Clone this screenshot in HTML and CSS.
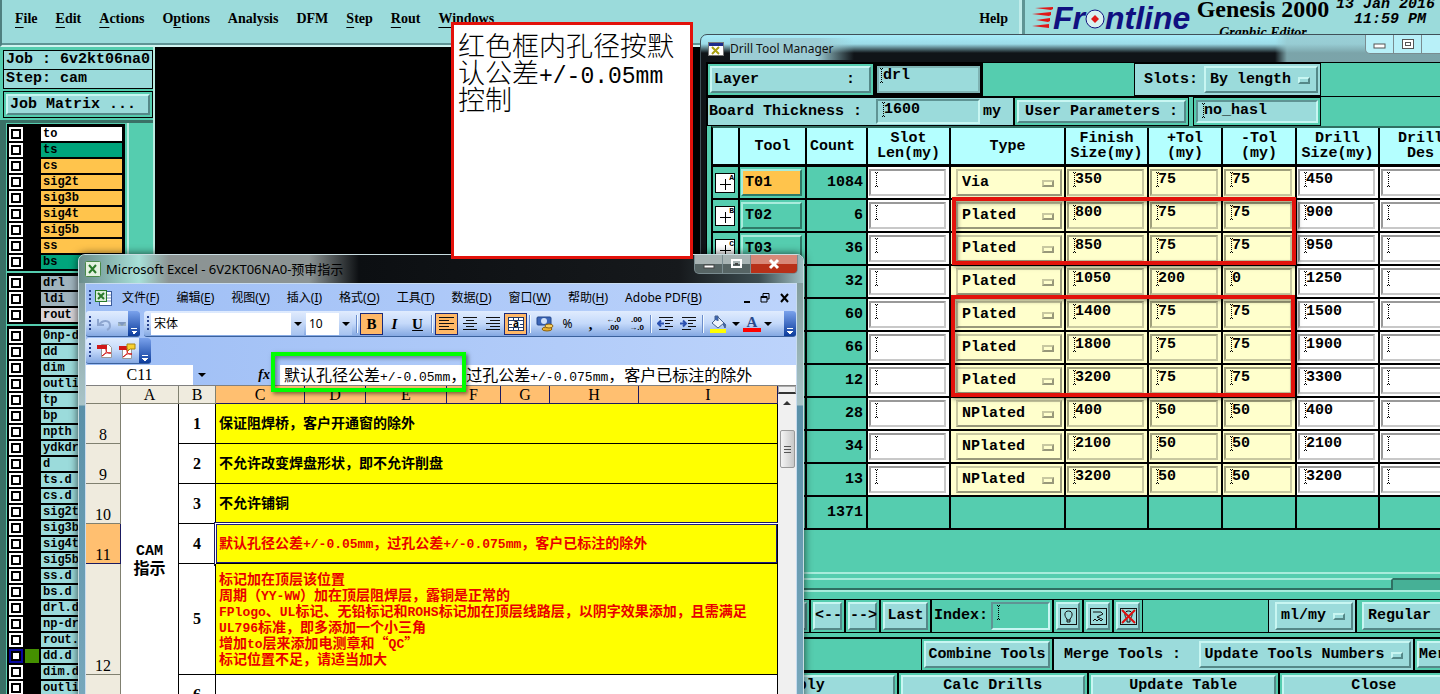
FILE: index.html
```html
<!DOCTYPE html>
<html lang="zh-CN">
<head>
    <meta charset="UTF-8">
    <meta name="viewport" content="width=device-width, initial-scale=1.0">
    <title>Genesis 2000 - Drill Tool Manager</title>
    <link rel="stylesheet" href="styles.css">
</head>
<body>
<div class="desktop">

    <!-- Genesis main window -->
    <header class="topbar">
        <nav class="menu">
            <a href="#"><u>F</u>ile</a>
            <a href="#"><u>E</u>dit</a>
            <a href="#"><u>A</u>ctions</a>
            <a href="#">O<u>p</u>tions</a>
            <a href="#">Analysis</a>
            <a href="#">DFM</a>
            <a href="#"><u>S</u>tep</a>
            <a href="#"><u>R</u>out</a>
            <a href="#"><u>W</u>indows</a>
            <a href="#" class="help">Help</a>
        </nav>
        <div class="brand">
            <svg class="speed" width="22" height="24" viewBox="0 0 22 24">
                <path d="M4 2L22 1V3L20 4zM1 8L20 6V9L18 10zM5 14L19 12V15L17 16zM1 20L18 18V22z" fill="#e01818"/>
            </svg>
            <div class="logo">Fr<svg width="20" height="22" viewBox="0 0 20 22"><circle cx="10" cy="12" r="9" fill="#d8f0f0" stroke="#101080" stroke-width="1"/><path d="M10 8l4 4-4 4-4-4z" fill="#e01818"/></svg>ntline</div>
            <div class="product">
                <div class="product-name">Genesis 2000</div>
                <div class="product-sub">Graphic Editor</div>
            </div>
            <div class="clock">13 Jan 2016<br>11:59 PM&nbsp;</div>
        </div>
    </header>

    <aside class="sidebar">
        <div class="job-info">
            <div class="info">Job : 6v2kt06na0</div>
            <div class="info">Step: cam</div>
            <div class="matrix"><button class="bevel">Job Matrix ...</button></div>
        </div>
        <div class="layers-wrap">
            <div class="layers" id="layers"></div>
            <div class="layers-side"></div>
        </div>
    </aside>

    <!-- Drill Tool Manager -->
    <section class="window drill">
        <div class="drill-title">
            <svg width="16" height="14" viewBox="0 0 16 14"><rect x=".5" y=".5" width="15" height="13" fill="#fff" stroke="#777"/><rect x="1" y="1" width="14" height="3" fill="#1c2c8c"/><path d="M4 5l7 7M11 5l-7 7" stroke="#a8a010" stroke-width="2"/></svg>
            <span>Drill Tool Manager</span>
            <div class="win-buttons light">
                <button aria-label="Minimize"><svg width="14" height="12"><rect x="1" y="6" width="11" height="4" fill="#fff" stroke="#555"/></svg></button>
                <button aria-label="Maximize"><svg width="14" height="12"><rect x="1.500" y="1.500" width="11" height="9" fill="#fff" stroke="#555"/><rect x="4.500" y="4.500" width="5" height="3" fill="none" stroke="#555"/></svg></button>
                <button class="wide" aria-label="Close"></button>
            </div>
        </div>
        <div class="drill-body">
            <div class="form-row first">
                <div class="box layer-box"><button class="bevel spread"><span>Layer</span><span>:</span></button></div>
                <div class="field focus"><input type="text" value="drl" aria-label="Layer"></div>
                <div class="box slots-box">
                    <label for="slots">Slots:</label>
                    <span class="drop bevel"><select id="slots"><option>By length</option></select></span>
                </div>
            </div>
            <div class="form-row second">
                <div class="box board-box">
                    <label for="board">Board Thickness :</label>
                    <div class="field"><input type="text" id="board" value="1600"></div>
                    <span>my</span>
                </div>
                <div class="box params-box"><button class="bevel">User Parameters :</button></div>
                <div class="box params-value"><div class="field"><input type="text" value="no_hasl" aria-label="User parameters"></div></div>
            </div>

            <table class="tools">
                <colgroup>
                    <col class="w-mark"><col class="w-tool"><col class="w-count"><col class="w-size"><col class="w-type">
                    <col class="w-size"><col class="w-tol"><col class="w-tol"><col class="w-size"><col class="w-size">
                    <col>
                </colgroup>
                <thead>
                    <tr>
                        <th></th><th>Tool</th><th class="left">Count</th><th>Slot<br>Len(my)</th><th>Type</th>
                        <th>Finish<br>Size(my)</th><th>+Tol<br>(my)</th><th>-Tol<br>(my)</th><th>Drill<br>Size(my)</th><th>Drill<br>Des</th><th></th>
                    </tr>
                </thead>
                <tbody id="tools"></tbody>
            </table>

            <div class="hscroll"><div class="thumb"></div></div>

            <div class="nav-row">
                <div class="box first-box"><button class="bevel">First</button></div>
                <div class="box arrow-box"><button class="bevel">&lt;--</button></div>
                <div class="box arrow-box"><button class="bevel">--&gt;</button></div>
                <div class="box last-box"><button class="bevel">Last</button></div>
                <div class="box index-box">
                    <label for="index">Index:</label>
                    <div class="field"><input type="text" id="index"></div>
                </div>
                <div class="box icon-box"><button class="bevel" aria-label="Highlight"><svg width="17" height="17" viewBox="0 0 17 17" fill="none" stroke="#111"><rect x=".5" y=".5" width="16" height="16"/><path d="M7 11C4 8 4 3 8.500 3S13 8 10 11v3H7zM7 12h3"/></svg></button></div>
                <div class="box icon-box"><button class="bevel" aria-label="Zoom"><svg width="17" height="17" viewBox="0 0 17 17" fill="none" stroke="#111"><rect x=".5" y=".5" width="16" height="16"/><path d="M3 4h8l2 2-6 3 5 2M3 13l2-2 2 2 2-2 2 2 2-2"/></svg></button></div>
                <div class="box icon-box"><button class="bevel" aria-label="Clear"><svg width="17" height="17" viewBox="0 0 17 17" fill="none" stroke="#111"><rect x=".5" y=".5" width="16" height="16"/><path d="M7 11C4 8 4 3 8.500 3S13 8 10 11v3H7z"/><path d="M2 2l13 13M15 2L2 15" stroke="#e01010" stroke-width="2"/></svg></button></div>
                <div class="gap"></div>
                <div class="box unit-box"><span class="drop bevel"><select aria-label="Units"><option>ml/my</option></select></span></div>
                <div class="box mode-box"><span class="drop bevel"><select aria-label="Mode"><option>Regular</option></select></span></div>
            </div>

            <div class="merge-row">
                <div class="gap"></div>
                <div class="box combine-box"><button class="bevel">Combine Tools</button></div>
                <div class="box merge-box">
                    <label for="merge">Merge Tools :</label>
                    <span class="drop bevel"><select id="merge"><option>Update Tools Numbers</option></select></span>
                </div>
                <div class="box merge-btn"><button class="bevel">Merge</button></div>
            </div>

            <div class="action-row">
                <div class="box"><button class="bevel">Apply</button></div>
                <div class="box"><button class="bevel">Calc Drills</button></div>
                <div class="box"><button class="bevel">Update Table</button></div>
                <div class="box"><button class="bevel">Close</button></div>
            </div>
        </div>
    </section>

    <div class="mark mark-a"></div>
    <div class="mark mark-b"></div>

    <!-- Excel -->
    <section class="window excel">
        <div class="excel-title">
            <svg width="16" height="16" viewBox="0 0 16 16"><rect x=".5" y=".5" width="15" height="15" rx="1" fill="#e4f2e0" stroke="#4a8a4a"/><path d="M4 4l7 8M11 4l-7 8" stroke="#2a7a2a" stroke-width="2"/></svg>
            <span>Microsoft Excel - 6V2KT06NA0-预审指示</span>
            <div class="win-buttons dark">
                <button aria-label="Minimize"><svg width="14" height="12"><rect x="2" y="7" width="10" height="3" fill="#fff" stroke="#444"/></svg></button>
                <button aria-label="Restore"><svg width="14" height="12"><rect x="2" y="2" width="9" height="7" fill="none" stroke="#fff" stroke-width="2"/><rect x="5" y="5" width="3" height="2" fill="#444"/></svg></button>
                <button class="wide close" aria-label="Close"><svg width="12" height="12"><path d="M2 2l8 8M10 2l-8 8" stroke="#fff" stroke-width="3"/></svg></button>
            </div>
        </div>
        <div class="excel-body">
            <nav class="excel-menu">
                <i class="grip"></i>
                <svg width="18" height="16" viewBox="0 0 18 16"><rect x="4.500" y="1.500" width="12" height="14" fill="#fff" stroke="#3c5c9c"/><path d="M12 5h4M12 8h4M12 11h4" stroke="#7a96c8"/><rect x=".5" y=".5" width="11" height="11" fill="#d8ecd8" stroke="#2a7a2a"/><path d="M3 3l6 6M9 3L3 9" stroke="#2a7a2a" stroke-width="2"/></svg>
                <a href="#">文件(<u>F</u>)</a>
                <a href="#">编辑(<u>E</u>)</a>
                <a href="#">视图(<u>V</u>)</a>
                <a href="#">插入(<u>I</u>)</a>
                <a href="#">格式(<u>O</u>)</a>
                <a href="#">工具(<u>T</u>)</a>
                <a href="#">数据(<u>D</u>)</a>
                <a href="#">窗口(<u>W</u>)</a>
                <a href="#">帮助(<u>H</u>)</a>
                <a href="#">Adobe PDF(<u>B</u>)</a>
                <svg class="mdi" width="48" height="12" viewBox="0 0 48 12" fill="none" stroke="#000"><path d="M2 10h6" stroke-width="2"/><path d="M21 4V1.500h6V7h-2M19 4.500h6V10h-6zM19 5.500h6"/><path d="M39 2l7 8M46 2l-7 8" stroke-width="2"/></svg>
            </nav>

            <div class="toolbars">
                <div class="bar">
                    <i class="grip"></i>
                    <button class="tb" aria-label="Undo"><svg width="18" height="14" viewBox="0 0 18 14"><path d="M2 2v6h6M3 8c3-5 11-6 11 1 0 2-1 3-3 4" fill="none" stroke="#8ea6d0" stroke-width="2"/></svg></button>
                    <i class="tri grey"></i>
                    <span class="bar-end"></span>
                </div>
                <div class="bar long">
                    <i class="grip"></i>
                    <span class="combo font"><input type="text" value="宋体" aria-label="Font"><button aria-label="Fonts"><i class="tri"></i></button></span>
                    <span class="combo size"><input type="text" value="10" aria-label="Font size"><button aria-label="Sizes"><i class="tri"></i></button></span>
                    <i class="sep"></i>
                    <button class="tb on serif"><b>B</b></button>
                    <button class="tb serif"><em>I</em></button>
                    <button class="tb serif"><u>U</u></button>
                    <i class="sep"></i>
                    <button class="tb on" aria-label="Left"><svg width="16" height="16" viewBox="0 0 16 16"><path d="M0 1.500h15M0 4.500h10M0 7.500h15M0 10.500h10M0 13.500h15" stroke="#111"/></svg></button>
                    <button class="tb" aria-label="Center"><svg width="16" height="16" viewBox="0 0 16 16"><path d="M1 1.500h14M4 4.500h8M1 7.500h14M4 10.500h8M1 13.500h14" stroke="#111"/></svg></button>
                    <button class="tb" aria-label="Right"><svg width="16" height="16" viewBox="0 0 16 16"><path d="M1 1.500h14M5 4.500h10M1 7.500h14M5 10.500h10M1 13.500h14" stroke="#111"/></svg></button>
                    <button class="tb on" aria-label="Merge"><svg width="16" height="14" viewBox="0 0 16 14"><rect x=".5" y=".5" width="15" height="13" fill="#fff" stroke="#223a6a"/><path d="M0 3.500h16M0 10.500h16M5.500 0v3M10.500 0v3M5.500 11v3M10.500 11v3M1 7.500h3M12 7.500h3" stroke="#223a6a"/><text x="5" y="10" font-size="10" font-weight="bold">a</text></svg></button>
                    <i class="sep"></i>
                    <button class="tb" aria-label="Currency"><svg width="18" height="16" viewBox="0 0 18 16"><rect x="1" y="1" width="14" height="8" rx="1" fill="#3c66b8" stroke="#24488c"/><circle cx="8" cy="5" r="3" fill="#cfe0f8"/><ellipse cx="11" cy="13" rx="5" ry="2" fill="#e8b030" stroke="#8a6010"/><ellipse cx="13" cy="10" rx="4" ry="2" fill="#f8d060" stroke="#8a6010"/></svg></button>
                    <button class="tb">%</button>
                    <button class="tb serif"><b>,</b></button>
                    <button class="tb tiny">←.0<br>.00</button>
                    <button class="tb tiny">.00<br>→.0</button>
                    <i class="sep"></i>
                    <button class="tb" aria-label="Outdent"><svg width="17" height="15" viewBox="0 0 17 15"><path d="M2 1.500h14M8 4.500h8M8 7.500h5M8 10.500h8M2 13.500h9" stroke="#111"/><path d="M7 7.500H2M4 4.500l-3 3 3 3" stroke="#2a50b0" fill="none" stroke-width="2"/></svg></button>
                    <button class="tb" aria-label="Indent"><svg width="17" height="15" viewBox="0 0 17 15"><path d="M2 1.500h14M8 4.500h8M8 7.500h5M8 10.500h8M2 13.500h9" stroke="#111"/><path d="M0 7.500h6M3 4.500l3 3-3 3" stroke="#2a50b0" fill="none" stroke-width="2"/></svg></button>
                    <i class="sep"></i>
                    <button class="tb" aria-label="Fill"><svg width="18" height="18" viewBox="0 0 18 18"><path d="M3 8l6-6 6 6-6 5z" fill="#eef4fc" stroke="#44608c"/><path d="M6 5V1h3v5M15 8c2 1 2 3 1 5l-2-4" fill="#3c66b8" stroke="#44608c"/><rect x="1" y="14" width="16" height="4" fill="#ff0"/></svg></button>
                    <i class="tri"></i>
                    <button class="tb font-color">A</button>
                    <i class="tri"></i>
                    <span class="bar-end"></span>
                </div>
            </div>
            <div class="toolbars">
                <div class="bar">
                    <i class="grip"></i>
                    <button class="tb" aria-label="PDF"><svg width="16" height="16" viewBox="0 0 16 16"><path d="M4.500 1.500h7l3 3v10h-10z" fill="#fff" stroke="#999"/><rect x="0" y="2" width="10" height="4" fill="#d01818"/><path d="M5 13c4-2 5-5 4-7 0 4 3 5 5 4-3-1-6 0-9 3z" fill="none" stroke="#d01818"/></svg></button>
                    <button class="tb" aria-label="PDF mail"><svg width="17" height="16" viewBox="0 0 17 16"><path d="M3.500 3.500h9v12h-9z" fill="#fff" stroke="#999"/><rect x="0" y="3" width="8" height="4" fill="#d01818"/><path d="M4 14c4-2 5-5 4-7 0 4 3 5 5 4-3-1-6 0-9 3z" fill="none" stroke="#d01818"/><path d="M8 1h8v5h-5l-2 2V6H8z" fill="#f8d030" stroke="#a88410"/></svg></button>
                    <span class="bar-end"></span>
                </div>
            </div>

            <div class="formula-row">
                <input class="name-box" type="text" value="C11" aria-label="Name box">
                <i class="tri"></i>
                <em class="fx">fx</em>
                <div class="formula">默认孔径公差<span>+/-0.05mm</span>，过孔公差<span>+/-0.075mm</span>，客户已标注的除外</div>
            </div>

            <div class="sheet-wrap">
                <table class="sheet">
                    <colgroup><col class="c0"><col class="ca"><col class="cb"><col class="cc"><col class="cd"><col class="ce"><col class="cf"><col class="cg"><col class="cc"><col class="ci"></colgroup>
                    <thead>
                        <tr><th></th><th>A</th><th>B</th><th class="sel">C</th><th class="sel">D</th><th class="sel">E</th><th class="sel">F</th><th class="sel">G</th><th class="sel">H</th><th class="sel">I</th></tr>
                    </thead>
                    <tbody>
                        <tr><th>8</th><td rowspan="6" class="group"><span>CAM</span><br>指示</td><td class="no">1</td><td colspan="7" class="rule">保证阻焊桥，客户开通窗的除外</td></tr>
                        <tr><th>9</th><td class="no">2</td><td colspan="7" class="rule">不允许改变焊盘形状，即不允许削盘</td></tr>
                        <tr><th>10</th><td class="no">3</td><td colspan="7" class="rule">不允许铺铜</td></tr>
                        <tr><th class="sel">11</th><td class="no">4</td><td colspan="7" class="rule red active">默认孔径公差<span>+/-0.05mm</span>，过孔公差<span>+/-0.075mm</span>，客户已标注的除外</td></tr>
                        <tr class="tall"><th>12</th><td class="no">5</td><td colspan="7" class="rule red">标记加在顶层该位置<br>周期（<span>YY-WW</span>）加在顶层阻焊层，露铜是正常的<br><span>FPlogo</span>、<span>UL</span>标记、无铅标记和<span>ROHS</span>标记加在顶层线路层，以阴字效果添加，且需满足<br><span>UL796</span>标准，即多添加一个小三角<br>增加<span>to</span>层来添加电测章和“<span>QC</span>”<br>标记位置不足，请适当加大</td></tr>
                        <tr><th></th><td class="no">6</td><td colspan="7"></td></tr>
                    </tbody>
                </table>
                <div class="vscroll">
                    <div class="split"></div>
                    <div class="up"></div>
                    <div class="vthumb"></div>
                </div>
            </div>
        </div>
    </section>

    <div class="mark mark-green"></div>
    <div class="note">红色框内孔径按默<br>认公差<span>+/-0.05mm</span><br>控制</div>
</div>

<script>
    const layerGroups = [
        [['to', 'white'], ['ts', 'green'], ['cs', 'orange'], ['sig2t', 'orange'], ['sig3b', 'orange'],
         ['sig4t', 'orange'], ['sig5b', 'orange'], ['ss', 'orange'], ['bs', 'green']],
        [['drl', 'grey'], ['ldi', 'grey'], ['rout', 'silver']],
        ['0np-d', 'dd', 'dim', 'outli', 'tp', 'bp', 'npth', 'ydkdr', 'd', 'ts.d', 'cs.d', 'sig2t', 'sig3b', 'sig4t',
         'sig5b', 'ss.d', 'bs.d', 'drl.d', 'np-dr', 'rout.', 'dd.d', 'dim.d', 'outli'].map(name => [name, 'aqua'])
    ];

    document.getElementById('layers').innerHTML = layerGroups.map(group =>
        '<div class="layer-group">' + group.map(([name, color]) => {
            const work = name === 'dd.d' ? ' work' : '';
            return `<label class="layer${work}"><input type="checkbox"><i></i><span class="${color}">${name}</span></label>`;
        }).join('') + '</div>'
    ).join('');

    // count, type, finish size, +tol, -tol, drill size
    const tools = [
        [1084, 'Via', 350, 75, 75, 450],
        [6, 'Plated', 800, 75, 75, 900],
        [36, 'Plated', 850, 75, 75, 950],
        [32, 'Plated', 1050, 200, 0, 1250],
        [60, 'Plated', 1400, 75, 75, 1500],
        [66, 'Plated', 1800, 75, 75, 1900],
        [12, 'Plated', 3200, 75, 75, 3300],
        [28, 'NPlated', 400, 50, 50, 400],
        [34, 'NPlated', 2100, 50, 50, 2100],
        [13, 'NPlated', 3200, 50, 50, 3200]
    ];

    const cell = (value, cls, label) =>
        `<td class="${cls}"><div class="field"><input type="text" value="${value}" aria-label="${label}"></div></td>`;

    const rows = tools.map(([count, type, finish, plus, minus, size], i) => {
        const id = 'T' + String(i + 1).padStart(2, '0');
        return `<tr>
            <td><span class="symbol">${'ABCDEFGHIJ'[i]}</span></td>
            <td><button class="bevel tool${i === 0 ? ' current' : ''}">${id}</button></td>
            <td class="count">${count}</td>
            ${cell('', 'plain', id + ' slot length')}
            <td class="cream"><span class="drop bevel"><select aria-label="${id} type"><option>${type}</option></select></span></td>
            ${cell(finish, 'cream', id + ' finish size')}
            ${cell(plus, 'cream', id + ' plus tolerance')}
            ${cell(minus, 'cream', id + ' minus tolerance')}
            ${cell(size, 'plain', id + ' drill size')}
            ${cell('', 'plain', id + ' drill designator')}
            <td></td>
        </tr>`;
    });
    const total = tools.reduce((sum, tool) => sum + tool[0], 0);
    rows.push(`<tr><td></td><td></td><td class="count">${total}</td>${'<td></td>'.repeat(8)}</tr>`);
    document.getElementById('tools').innerHTML = rows.join('');
</script>
</body>
</html>
```
FILE: styles.css
```css
*, *::before, *::after {
    box-sizing: border-box;
}

body {
    margin: 0;
    background: #000;
    color: #000;
    font: bold 15px/18px "Liberation Mono", monospace;
}

button, input, select {
    margin: 0;
    padding: 0;
    border: 0;
    border-radius: 0;
    background: none;
    color: inherit;
    font: inherit;
    outline: none;
}

select {
    appearance: none;
    width: 100%;
}

a {
    color: inherit;
    text-decoration: none;
}

.desktop {
    position: relative;
    height: 100vh;
    overflow: hidden;
    background: #000;
}

/* Genesis main window */

.topbar {
    display: flex;
    height: 47px;
    background: #9bdbdb;
    border-left: 2px solid #4f8080;
    border-bottom: 2px solid #d0f4f0;
    box-shadow: inset 0 -2px 0 #5f9494;
}

.menu {
    display: flex;
    flex: 1;
    gap: 18px;
    padding: 9px 14px 0 13px;
    font: bold 14px/19px "Liberation Serif", serif;
}

.menu u {
    text-underline-offset: 4px;
}

.menu .help {
    margin-left: auto;
}

.brand {
    display: flex;
    width: 418px;
    padding-left: 6px;
    border-left: 3px solid #5f9494;
    box-shadow: -3px 0 0 #c0ecea;
    overflow: hidden;
    white-space: nowrap;
}

.speed {
    margin-top: 6px;
}

.logo {
    width: 142px;
    color: #101080;
    font: italic bold 32px/36px "Liberation Sans", sans-serif;
}

.product {
    width: 136px;
    text-align: center;
    font-family: "Liberation Serif", serif;
}

.product-name {
    margin-top: -7px;
    font-size: 24px;
    line-height: 32px;
}

.product-sub {
    font-size: 14px;
    line-height: 16px;
    font-style: italic;
}

.clock {
    margin-top: -3px;
    font-style: italic;
    font-size: 15px;
    line-height: 15px;
    text-align: right;
    width: 104px;
}

.sidebar {
    width: 155px;
    height: calc(100vh - 47px);
    background: #55cdaf;
    border-right: 2px solid #b8ece0;
    overflow: hidden;
}

.job-info {
    padding: 3px 0 0 3px;
    height: 73px;
}

.info {
    width: 150px;
    height: 20px;
    margin-bottom: -1px;
    padding-left: 2px;
    border: 1px solid #000;
    background: #9bdbdb;
    line-height: 17px;
    white-space: nowrap;
}

.matrix {
    width: 150px;
    height: 27px;
    margin-top: 3px;
    padding: 2px;
    border: 1px solid #000;
}

.matrix .bevel {
    padding-left: 2px;
    text-align: left;
}

.layers-wrap {
    display: flex;
    height: 100%;
    border-left: 6px solid #3a7066;
    border-top: 3px solid #3a7066;
}

.layers {
    width: 121px;
    padding-top: 2px;
    background: #000;
    border-left: 1px solid #55cdaf;
    border-top: 1px solid #55cdaf;
    border-right: 2px solid #55cdaf;
    font-size: 12px;
    line-height: 15px;
}

.layers-side {
    border-left: 2px solid #b8ece0;
}

.layer-group {
    border-bottom: 2px solid #55cdaf;
    padding-bottom: 1px;
    margin-bottom: 2px;
}

.layer {
    display: flex;
    height: 16px;
    padding: 1px 3px 1px 2px;
}

.layer input {
    appearance: none;
    width: 14px;
    height: 14px;
    background: #fff;
    border: 2px solid #fff;
    box-shadow: inset 0 0 0 2px #000;
}

.layer i {
    width: 14px;
    margin: 0 2px;
}

.layer span {
    flex: 1;
    padding-left: 2px;
}

.layer.work input {
    border-color: #0808a0;
}

.layer.work i {
    background: #449000;
}

.white { background: #fff; }
.green { background: #00a57c; }
.orange { background: #ffc44c; }
.grey { background: #a0b4be; }
.silver { background: #d8d4d8; }
.aqua { background: #9bdbdb; }

/* Shared Motif parts */

.bevel {
    display: block;
    width: 100%;
    height: 100%;
    background: #9bdbdb;
    border: 2px solid;
    border-color: #c8f6f2 #558888 #558888 #c8f6f2;
    text-align: center;
    white-space: nowrap;
}

.box {
    height: 100%;
    padding: 2px;
    border: 1px solid #000;
}

.field {
    position: relative;
    height: 100%;
    border: 2px solid;
    border-color: #5f9494 #c8f6f2 #c8f6f2 #5f9494;
    background: #9bdbdb;
}

.field::before {
    content: "";
    position: absolute;
    left: 4px;
    top: 1px;
    width: 3px;
    height: 15px;
    border-top: 1px dotted #000;
    border-bottom: 1px dotted #000;
    background: repeating-linear-gradient(#000 0 1px, transparent 1px 2px) center / 1px 100% no-repeat;
}

.field input {
    display: block;
    width: 100%;
    height: 17px;
    padding-left: 6px;
}

.drop {
    position: relative;
}

.drop::after {
    content: "";
    position: absolute;
    right: 6px;
    top: 50%;
    width: 12px;
    height: 7px;
    margin-top: -3px;
    border: 2px solid;
    border-color: #c8f6f2 #558888 #558888 #c8f6f2;
    pointer-events: none;
}

.drop select {
    height: 100%;
    padding-left: 4px;
}

.window {
    position: absolute;
    border-radius: 7px 7px 0 0;
}

.win-buttons {
    display: flex;
    height: 19px;
    border: 1px solid #7a8c90;
    border-top: 0;
    border-radius: 0 0 5px 5px;
    overflow: hidden;
}

.win-buttons button {
    display: flex;
    align-items: center;
    justify-content: center;
    width: 28px;
    border-right: 1px solid #7a8c90;
}

.win-buttons .wide {
    width: 46px;
    border: 0;
}

/* Drill Tool Manager */

.drill {
    left: 700px;
    right: -37px;
    top: 34px;
    bottom: -10px;
    padding: 0 7px 0 5px;
    border: 1px solid #405058;
    background:
        linear-gradient(90deg, transparent 574px, rgba(150, 200, 206, 0.8) 586px) 0 0 / 100% 28px no-repeat,
        linear-gradient(#a8ecf8 0, #9cdce8 9px, #101418 18px, #101418 60%, #3a6060);
}

.drill-title {
    display: flex;
    align-items: center;
    gap: 6px;
    height: 27px;
    padding-left: 2px;
    color: #111;
    font: 12px/22px "Noto Sans", sans-serif;
}

.drill-title span {
    padding-right: 20px;
    background: linear-gradient(90deg, #9cccd4 70%, transparent);
}

.drill-title .win-buttons {
    align-self: flex-start;
    margin-left: auto;
}

.light {
    background: #b8f0f8;
}

.drill-body {
    display: flex;
    flex-direction: column;
    height: calc(100% - 27px);
    background: #55cdaf;
    border-left: 1px solid #000;
    border-top: 1px solid #000;
}

.form-row {
    display: flex;
    flex: none;
}

.form-row.first {
    height: 34px;
    border-bottom: 1px solid #000;
}

.form-row.second {
    height: 29px;
}

.spread {
    display: flex;
    justify-content: space-between;
    align-items: center;
    padding: 0 14px 0 2px;
}

.layer-box {
    width: 167px;
}

.focus {
    width: 109px;
    border: 0;
    box-shadow: inset 0 0 0 3px #000, inset 0 0 0 5px #7fb4b4;
    padding: 4px 3px;
}

.focus::before {
    left: 6px;
    top: 5px;
}

.slots-box {
    display: flex;
    align-items: center;
    width: 187px;
    margin-left: 151px;
    padding-left: 9px;
    background: #9bdbdb;
}

.slots-box label {
    width: 60px;
}

.slots-box .drop {
    width: 114px;
}

.board-box {
    display: flex;
    align-items: center;
    width: 307px;
    padding: 1px 0;
    background: #9bdbdb;
}

.board-box label {
    width: 168px;
    padding-left: 1px;
}

.board-box .field {
    width: 104px;
    margin-right: 3px;
}

.params-box {
    width: 175px;
}

.params-value {
    width: 128px;
    margin-left: 4px;
}

.tools {
    flex: none;
    align-self: flex-start;
    width: 100%;
    margin-left: 4px;
    table-layout: fixed;
    border-collapse: separate;
    border-spacing: 0;
    border-top: 2px solid #2f6f62;
    border-left: 2px solid #000;
}

.tools .w-mark { width: 27px; }
.tools .w-tool { width: 67px; }
.tools .w-count { width: 61px; }
.tools .w-size { width: 83px; }
.tools .w-type { width: 115px; }
.tools .w-tol { width: 74px; }

.tools th {
    height: 37px;
    padding: 0;
    background: #b4ffff;
    border-right: 2px solid #000;
    border-bottom: 1px solid #000;
    font-weight: bold;
    line-height: 15px;
}

.tools .left {
    text-align: left;
    padding-left: 3px;
}

.tools td {
    height: 33px;
    padding: 2px 3px 2px 1px;
    border-right: 2px solid #000;
    border-bottom: 2px solid #000;
}

.tools tbody tr:first-child td {
    height: 35px;
    border-top: 2px solid #000;
}

.tools .field, .tools .drop, .tools .tool {
    height: 27px;
}

.tools .count {
    padding-right: 3px;
    text-align: right;
}

.tools .plain {
    background: #fff;
}

.tools .plain .field {
    background: #fff;
    border-color: #999 #c8c8c8 #c8c8c8 #999;
}

.tools .cream {
    background: #ffffcc;
}

.tools .cream .field {
    background: #ffffcc;
    border-color: #a0a07c #c8c8a0 #c8c8a0 #a0a07c;
}

.tools .cream .drop, .tools .cream .drop::after {
    background: #ffffcc;
    border-color: #c8c8a0 #98987a #98987a #c8c8a0;
}

.tools .cream .drop {
    width: 106px;
    margin-left: 4px;
}

.tools .tool {
    padding-left: 2px;
    background: #55cdaf;
    border-color: #a8ecdc #2f7a68 #2f7a68 #a8ecdc;
    text-align: left;
}

.tools .current {
    background: #ffc44c;
}

.symbol {
    display: block;
    width: 20px;
    height: 20px;
    margin-left: 1px;
    border: 1px solid #000;
    background:
        linear-gradient(#000, #000) 4px 10px / 11px 1px no-repeat,
        linear-gradient(#000, #000) 9px 5px / 1px 11px no-repeat,
        #fff;
    font-size: 8px;
    line-height: 7px;
    text-align: right;
}

.hscroll {
    flex: none;
    height: 20px;
    margin-top: 42px;
    border-top: 2px solid #a8ecdc;
    border-bottom: 2px solid #a8ecdc;
    padding-top: 4px;
    background: linear-gradient(#55cdaf 0 4px, #2f6f62 4px 6px, #46b096 6px);
}

.thumb {
    width: 90%;
    height: 12px;
    background: #55cdaf;
    border: 2px solid;
    border-color: #a8ecdc #2f6f62 #2f6f62 #a8ecdc;
}

.nav-row, .merge-row, .action-row {
    display: flex;
    flex: none;
    height: 34px;
}

.nav-row {
    margin-top: 7px;
}

.merge-row {
    margin-top: 4px;
    border-top: 1px solid #000;
}

.action-row {
    height: 28px;
    border-top: 1px solid #000;
}

.action-row .box {
    flex: 1;
}

.gap {
    flex: 1;
    border-top: 1px solid #000;
    border-bottom: 1px solid #000;
}

.first-box { width: 103px; }
.arrow-box { width: 35px; }
.last-box { width: 51px; }

.nav-row .gap {
    flex: none;
    width: 125px;
}

.index-box {
    display: flex;
    align-items: center;
    width: 122px;
}

.index-box label {
    width: 58px;
}

.index-box .field {
    width: 59px;
    background: #55cdaf;
}

.icon-box {
    width: 30px;
}

.icon-box .bevel {
    display: flex;
    align-items: center;
    justify-content: center;
}

.unit-box, .merge-box {
    background: #9bdbdb;
}

.unit-box {
    width: 88px;
    padding-left: 6px;
}

.mode-box {
    width: 113px;
    padding-left: 5px;
}

.merge-row .gap {
    flex: none;
    width: 214px;
}

.combine-box {
    width: 132px;
}

.merge-box {
    display: flex;
    align-items: center;
    width: 361px;
    padding-left: 10px;
}

.merge-box label {
    width: 135px;
}

.merge-box .drop {
    width: 213px;
}

.merge-btn {
    flex: 1;
}

/* Annotations */

.mark {
    position: absolute;
    border: 4px solid #e3120b;
    box-shadow: 2px 2px 4px rgba(0, 0, 0, 0.5), inset 2px 2px 4px rgba(0, 0, 0, 0.4);
}

.mark-a {
    left: 952px;
    top: 197px;
    width: 344px;
    height: 68px;
}

.mark-b {
    left: 951px;
    top: 295px;
    width: 344px;
    height: 102px;
}

.mark-green {
    left: 271px;
    top: 352px;
    width: 195px;
    height: 40px;
    border-color: #0f0;
}

.note {
    position: absolute;
    left: 451px;
    top: 22px;
    width: 242px;
    height: 237px;
    padding: 6px 4px;
    border: 3px solid #e3120b;
    background: #fff;
    font: 300 27px/27px "Noto Sans CJK SC", sans-serif;
    white-space: nowrap;
}

.note span {
    font: 23px/0 "Liberation Mono", monospace;
}

/* Excel */

.excel {
    left: 78px;
    top: 254px;
    width: 726px;
    bottom: -12px;
    padding: 0 6px;
    border: 1px solid #c8dce0;
    background: linear-gradient(#7a9494 0, #a8c4c8 150px, #5a90a8 151px, #78a8bc);
    box-shadow: 0 0 8px rgba(0, 0, 0, 0.7);
    font: 12px/16px "Noto Sans", "Noto Sans CJK SC", sans-serif;
}

.excel-title {
    display: flex;
    align-items: center;
    gap: 5px;
    height: 28px;
    margin: 0 -6px;
    padding-left: 6px;
    border-radius: 6px 6px 0 0;
    background: linear-gradient(90deg, #6a8c8a, #a8e0d8 60px, #8c9494 90px, #8c9494 230px, #0c0f12 280px, #16191c 600px, #3c4c50 680px, #a0c0c4);
    font-size: 13px;
}

.excel-title .win-buttons {
    align-self: flex-start;
    margin: 0 5px 0 auto;
}

.dark {
    background: linear-gradient(#a8b4b4 50%, #566464 50%);
}

.win-buttons .close {
    background: linear-gradient(#d88878 50%, #b83018 50%);
}

.excel-body {
    display: flex;
    flex-direction: column;
    height: calc(100% - 28px);
    border: 1px solid #c8dcf0;
    background: linear-gradient(90deg, #9ebef5, #bcd3fb);
    overflow: hidden;
}

.excel-menu {
    display: flex;
    flex: none;
    align-items: center;
    gap: 17px;
    height: 27px;
    padding: 0 6px 0 1px;
    white-space: nowrap;
}

.excel-menu u {
    text-underline-offset: 2px;
}

.grip {
    flex: none;
    width: 2px;
    height: 16px;
    margin: 0 2px;
    background: repeating-linear-gradient(#27418c 0 2px, transparent 2px 4px);
}

.excel-menu .grip {
    margin-right: -13px;
}

.excel-menu svg {
    margin-right: -8px;
}

.excel-menu .mdi {
    margin: 0 0 0 auto;
}

.toolbars {
    display: flex;
    flex: none;
    gap: 4px;
    height: 27px;
}

.bar {
    display: flex;
    align-items: center;
    height: 26px;
    padding-left: 1px;
    border-radius: 3px;
    background: linear-gradient(#e0ecfe, #c4d9fa 50%, #84a8e2);
    border-bottom: 1px solid #3b619c;
    overflow: hidden;
}

.bar.long {
    flex: 1;
}

.bar-end {
    width: 12px;
    height: 100%;
    margin-left: auto;
    background:
        linear-gradient(#fff, #fff) 3px 17px / 6px 1px no-repeat,
        conic-gradient(from -45deg at 50% 100%, #fff 90deg, transparent 0) 3px 20px / 6px 3px no-repeat,
        linear-gradient(#7aa2ec, #0c3c9c);
}

.tb {
    flex: none;
    display: flex;
    align-items: center;
    justify-content: center;
    width: 23px;
    height: 22px;
}

.tb.on {
    background: #ffb867;
    border: 1px solid #1a2a78;
}

.tb.serif {
    font: bold 15px/16px "Liberation Serif", serif;
}

.tb.tiny {
    font: bold 8px/8px "Liberation Sans", sans-serif;
}

.tb.font-color {
    width: 18px;
    height: 17px;
    border-bottom: 4px solid #f00;
    color: #2a4a8c;
    font: bold 15px/12px "Liberation Serif", serif;
}

.sep {
    flex: none;
    width: 2px;
    height: 18px;
    margin: 0 2px;
    border-left: 1px solid #6a8ccb;
    border-right: 1px solid #f1f9ff;
}

.tri {
    flex: none;
    width: 8px;
    margin: 0 3px;
    border: 4px solid transparent;
    border-top-color: #000;
    border-bottom: 0;
}

.tri.grey {
    margin: 0 2px;
    border-top-color: #8098c0;
}

.combo {
    display: flex;
    height: 22px;
    margin-right: 2px;
    background: #fff;
}

.combo input {
    flex: 1;
    min-width: 0;
    padding-left: 3px;
}

.combo button {
    display: flex;
    align-items: center;
    justify-content: center;
    width: 13px;
    background: linear-gradient(#dce8fc, #a8c4f0);
}

.combo.font { width: 153px; }
.combo.size { width: 46px; }

.formula-row {
    display: flex;
    flex: none;
    align-items: center;
    height: 20px;
}

.formula-row .tri {
    margin: 0 5px;
}

.name-box {
    width: 107px;
    height: 20px;
    background: #fff;
    text-align: center;
    font: 16px/20px "Liberation Serif", serif;
}

.fx {
    margin-left: auto;
    padding-right: 10px;
    font: italic bold 14px/16px "Liberation Serif", serif;
}

.formula {
    width: 516px;
    height: 20px;
    padding-left: 4px;
    background: #fff;
    font: 16px/18px "Noto Sans CJK SC", sans-serif;
    white-space: nowrap;
}

.formula span, .rule span, .group span {
    font-family: "Liberation Mono", monospace;
    font-size: 13px;
    line-height: 0;
}

.sheet-wrap {
    display: flex;
    flex: 1;
    background: #fff;
    border-top: 1px solid #808080;
}

.sheet {
    width: 692px;
    height: 320px;
    table-layout: fixed;
    border-collapse: separate;
    border-spacing: 0;
}

.c0 { width: 35px; }
.ca { width: 58px; }
.cb { width: 37px; }
.cc { width: 89px; }
.cd { width: 61px; }
.ce { width: 81px; }
.cf { width: 54px; }
.cg { width: 49px; }
.ci { width: 139px; }

.sheet th, .sheet td {
    padding: 0;
    border-right: 1px solid #000;
    border-bottom: 1px solid #000;
}

.sheet th {
    background: #efebde;
    border-color: #808070;
    font: 16px/16px "Liberation Serif", serif;
    vertical-align: bottom;
}

.sheet thead th {
    height: 18px;
}

.sheet .sel {
    background: #ffbf70;
    border-color: #1a1a60;
}

.sheet tbody tr {
    height: 40px;
}

.sheet .tall {
    height: 111px;
}

.sheet .group {
    padding-bottom: 2px;
    background: #fff;
    text-align: center;
    font: bold 16px/19px "Noto Sans CJK SC", sans-serif;
}

.sheet .group span {
    font-size: 15px;
}

.sheet .no {
    text-align: center;
    font: bold 16px/16px "Liberation Serif", serif;
}

.sheet .rule {
    padding: 0 0 3px 3px;
    background: #ff0;
    font: bold 14px/16px "Noto Sans CJK SC", sans-serif;
    white-space: nowrap;
}

.sheet .red {
    color: #e80000;
}

.sheet .active {
    box-shadow: inset 0 0 0 1px #1a1a80, 0 0 0 1px #fff, 0 0 0 2px #1a1a60;
}

.vscroll {
    flex: 1;
    background: #f0f0f0;
}

.split {
    height: 8px;
    border: 1px solid #aaa;
    border-bottom: 2px solid #333;
}

.up {
    width: 0;
    margin: 7px auto 0;
    border: 4px solid transparent;
    border-top: 0;
    border-bottom-color: #333;
}

.vthumb {
    width: 15px;
    height: 38px;
    margin: 25px auto 0;
    border: 1px solid #999;
    border-radius: 2px;
    background:
        repeating-linear-gradient(#555 0 1px, transparent 1px 3px) 3px 15px / 7px 8px no-repeat,
        linear-gradient(90deg, #f4f4f4, #c8c8c8);
}
```
